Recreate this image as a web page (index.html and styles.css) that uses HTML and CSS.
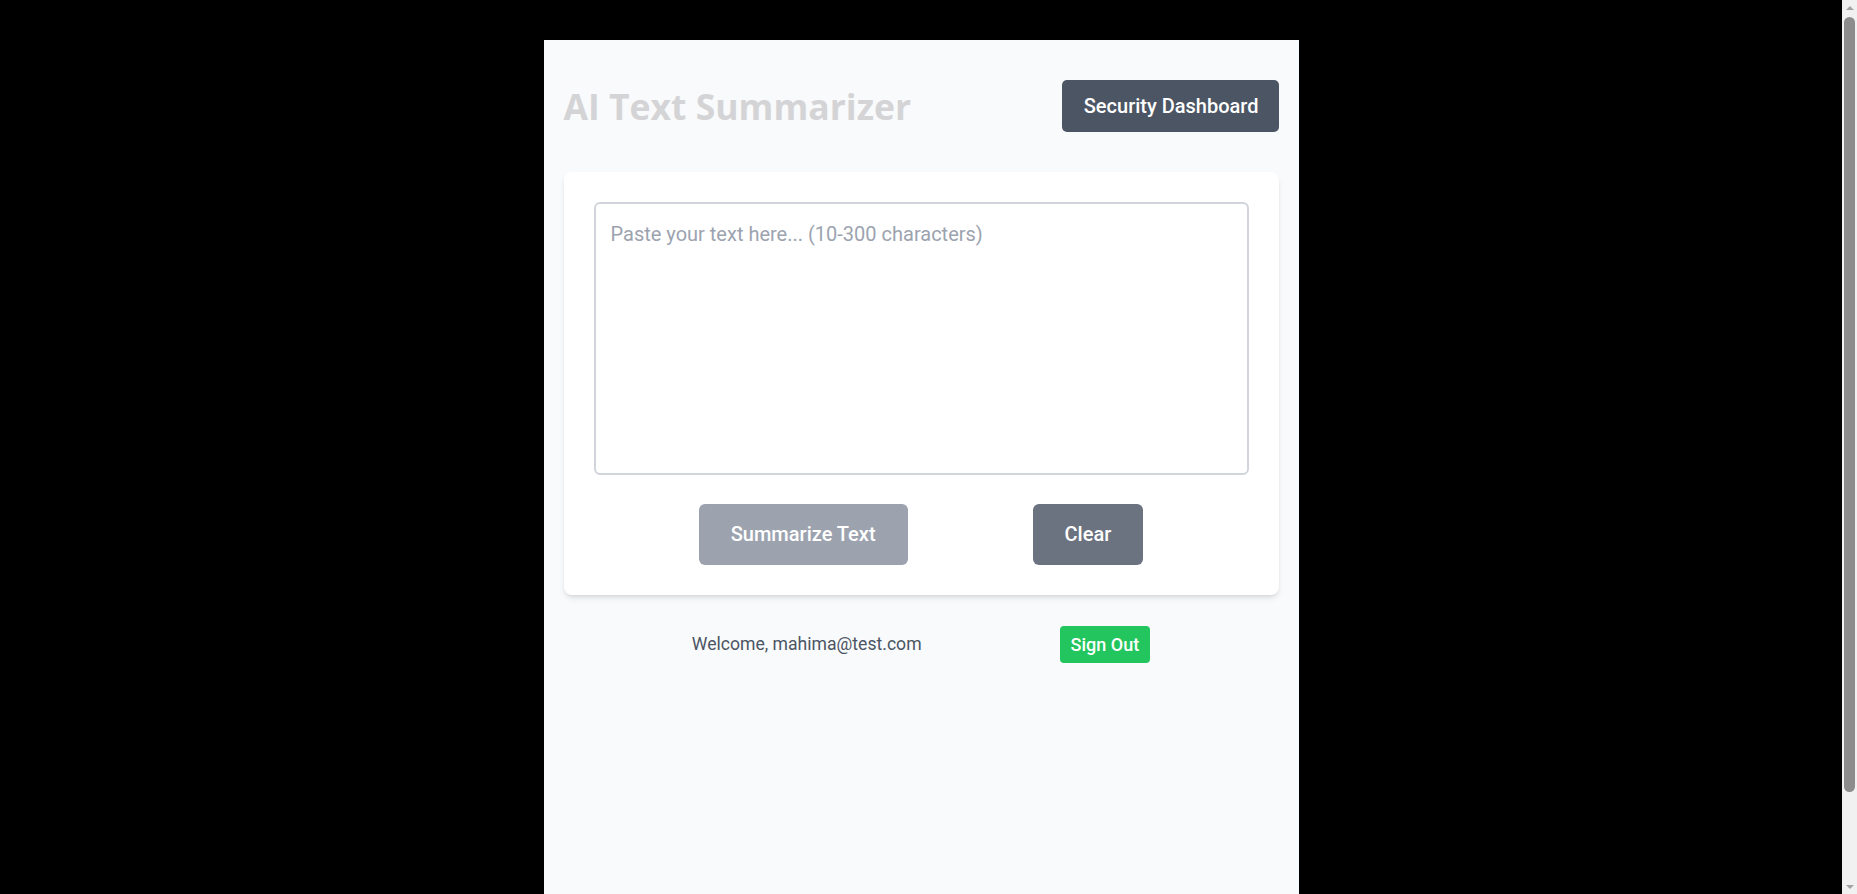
FILE: index.html
```html
<!DOCTYPE html>
<html lang="en">
<head>
<meta charset="utf-8">
<title>AI Text Summarizer</title>
<link rel="stylesheet" href="styles.css">
</head>
<body>
  <div class="viewport">
    <div class="page">
      <header class="header">
        <h1 class="title">AI Text Summarizer</h1>
        <button class="btn btn-dark">Security Dashboard</button>
      </header>
      <section class="card">
        <textarea class="input" placeholder="Paste your text here... (10-300 characters)"></textarea>
        <div class="actions">
          <button class="btn btn-lg btn-disabled">Summarize Text</button>
          <button class="btn btn-lg btn-gray">Clear</button>
        </div>
      </section>
      <div class="user-row">
        <span class="welcome">Welcome, mahima@test.com</span>
        <button class="btn btn-green">Sign Out</button>
      </div>
    </div>
  </div>
  <div class="scrollbar" aria-hidden="true">
    <span class="arrow arrow-up"></span>
    <span class="track"><span class="thumb"></span></span>
    <span class="arrow arrow-down"></span>
  </div>
</body>
</html>
```

FILE: styles.css
```css
html, body {
  margin: 0;
  padding: 0;
  background: #000;
}

body {
  font-family: Roboto, "Open Sans", sans-serif;
}

.viewport {
  padding-right: 15px;
  padding-top: 40px;
  padding-bottom: 40px;
}

.page {
  width: 755px;
  min-height: 930px;
  margin: 0 auto;
  padding: 0 20px;
  box-sizing: border-box;
  background: #f9fafb;
}

.header {
  display: flex;
  justify-content: space-between;
  align-items: center;
  padding-top: 40px;
  margin-bottom: 40px;
}

.title {
  margin: 0;
  font-family: "Open Sans", Roboto, sans-serif;
  font-size: 35.5px;
  line-height: 40px;
  font-weight: 700;
  color: #d4d4d6;
}

.btn {
  border: none;
  font-family: inherit;
  color: #fff;
  cursor: pointer;
  font-weight: 500;
}

.btn-dark {
  background: #4b5563;
  border-radius: 5px;
  font-size: 20px;
  line-height: 28px;
  padding: 12px 20px 12px 22px;
}

.card {
  background: #fff;
  border-radius: 8px;
  padding: 30px;
  box-shadow: 0 4px 6px -1px rgba(0,0,0,0.1), 0 2px 4px -2px rgba(0,0,0,0.1);
}

.input {
  display: block;
  width: 100%;
  height: 273px;
  box-sizing: border-box;
  border: 2px solid #d1d5db;
  border-radius: 6px;
  padding: 15px 15px;
  font-family: inherit;
  font-size: 20px;
  line-height: 30px;
  resize: none;
  background: #fff;
  color: #111827;
  outline: none;
}

.input::placeholder {
  color: #9ca3af;
}

.actions {
  display: flex;
  justify-content: center;
  gap: 125px;
  margin-top: 29px;
}

.btn-lg {
  font-size: 20px;
  line-height: 29px;
  padding: 16px 32px;
  border-radius: 6px;
}

.btn-disabled {
  background: #9ca3af;
  cursor: not-allowed;
}

.btn-gray {
  background: #6b7280;
}

.user-row {
  display: flex;
  justify-content: center;
  align-items: center;
  gap: 138px;
  margin-top: 31px;
}

.welcome {
  font-size: 17.6px;
  line-height: 27px;
  color: #4b5563;
}

.btn-green {
  background: #22c55e;
  font-size: 18px;
  line-height: 27px;
  padding: 5px 11px;
  border-radius: 4px;
}

/* browser scrollbar overlay */
.scrollbar {
  position: fixed;
  top: 0;
  right: 0;
  bottom: 0;
  width: 15px;
  background: #f1f1f1;
  display: flex;
  flex-direction: column;
}

.arrow {
  height: 15px;
  display: flex;
  align-items: center;
  justify-content: center;
}

.arrow::before {
  content: "";
  border-left: 4px solid transparent;
  border-right: 4px solid transparent;
}

.arrow-up::before {
  border-bottom: 4px solid #a3a3a3;
}

.arrow-down::before {
  border-top: 4px solid #a3a3a3;
}

.track {
  flex: 1;
  padding: 2px;
  display: flex;
  flex-direction: column;
}

.thumb {
  height: 775px;
  background: #8c8c8c;
  border-radius: 6px;
}
```
